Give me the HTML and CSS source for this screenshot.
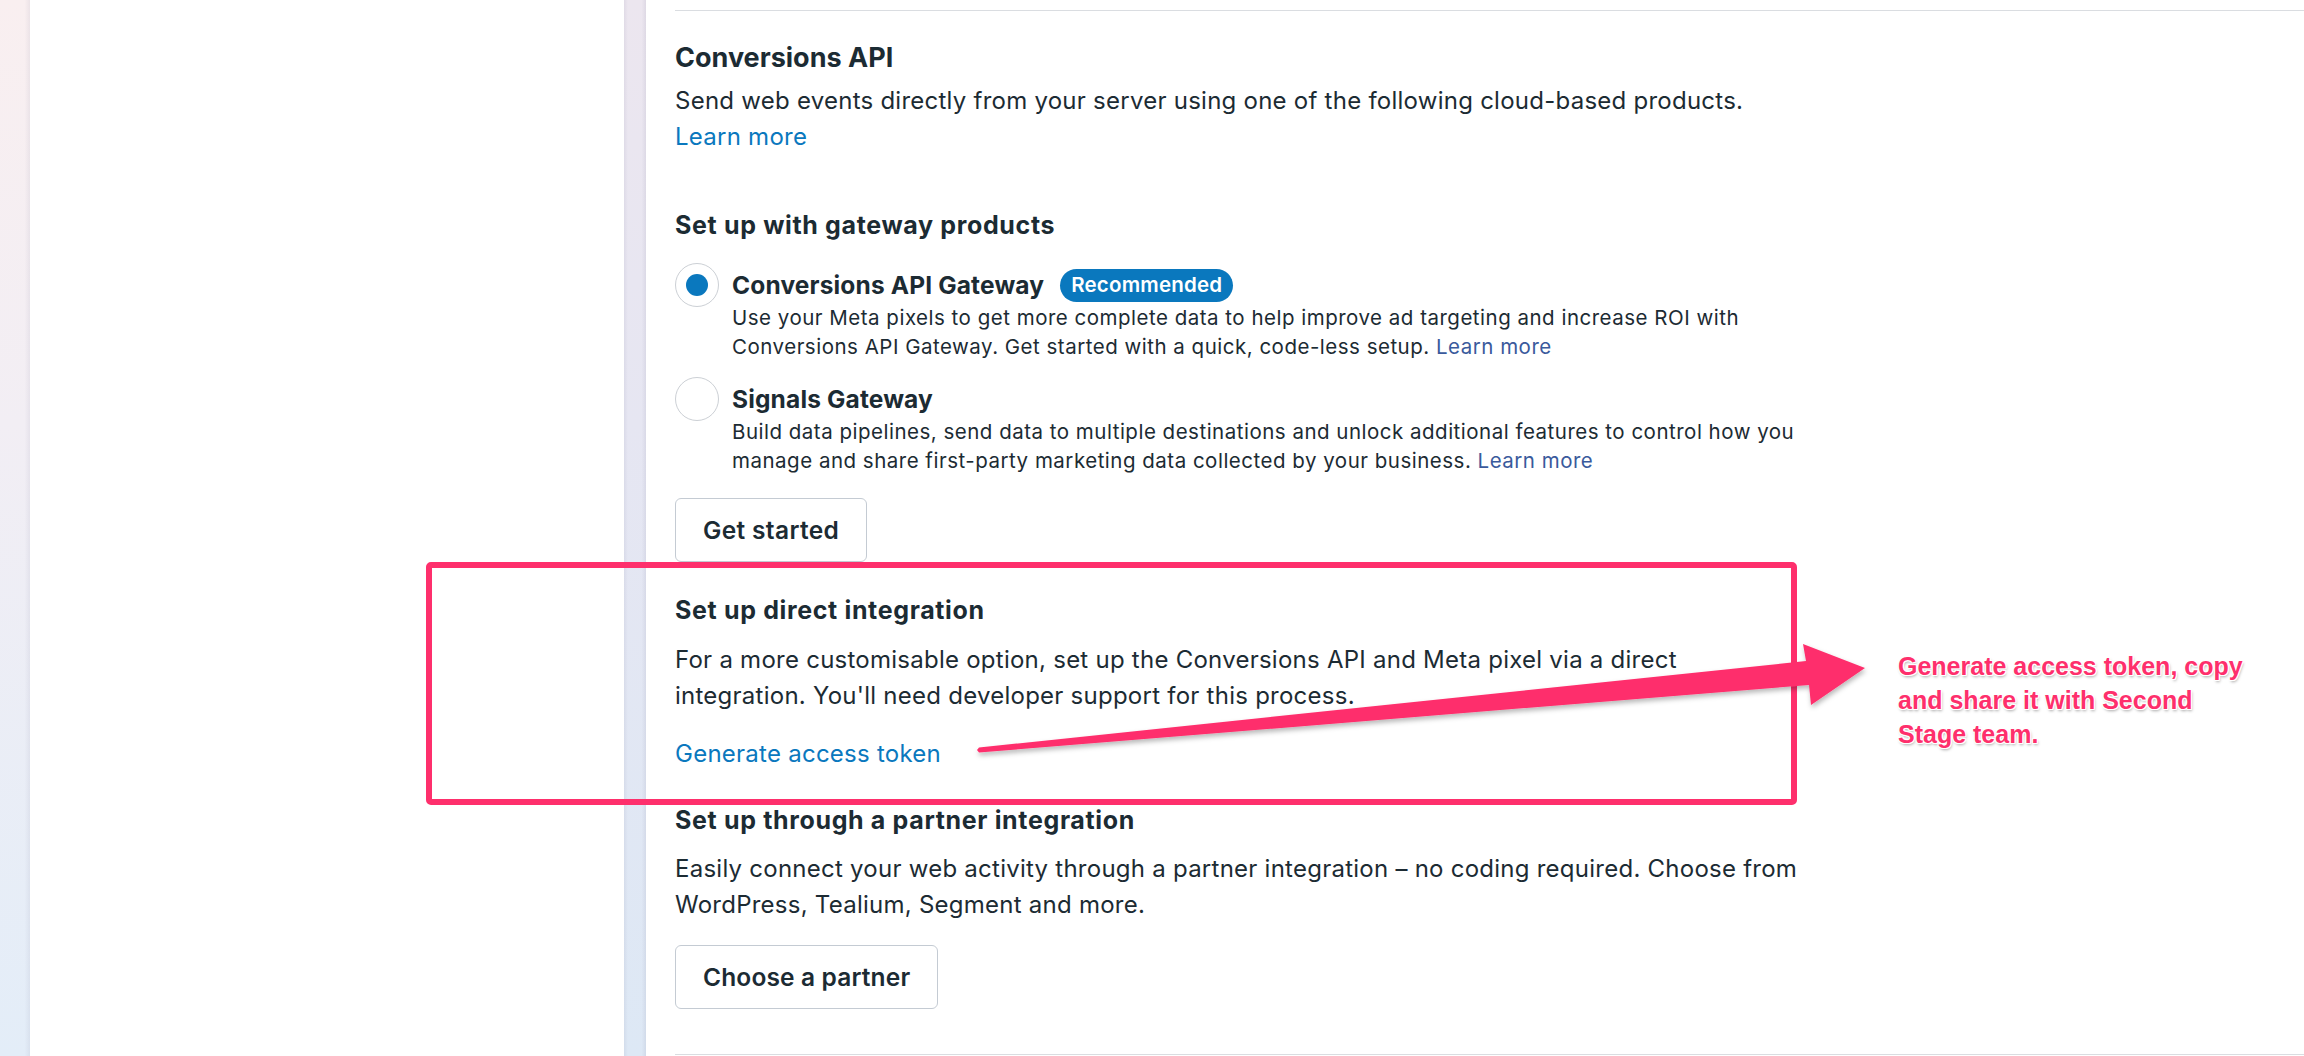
FILE: index.html
```html
<!DOCTYPE html>
<html lang="en">
<head>
<meta charset="utf-8">
<title>Conversions API</title>
<link rel="stylesheet" href="styles.css">
</head>
<body>
<div class="page">
  <div class="gutter gutter-left"></div>
  <aside class="sidebar"></aside>
  <div class="gutter gutter-mid"></div>
  <main class="main">
    <div class="rule"></div>
    <section class="capi">
      <h2 class="title">Conversions API</h2>
      <p class="lead">Send web events directly from your server using one of the following cloud-based products.<br><a class="link" href="#">Learn more</a></p>

      <h3 class="heading heading-gateway">Set up with gateway products</h3>

      <div class="option option-first">
        <span class="radio radio-on"><span class="radio-dot"></span></span>
        <div class="option-body">
          <div class="option-title">Conversions API Gateway <span class="badge">Recommended</span></div>
          <p class="option-desc">Use your Meta pixels to get more complete data to help improve ad targeting and increase ROI with Conversions API Gateway. Get started with a quick, code-less setup. <a class="link-inline" href="#">Learn more</a></p>
        </div>
      </div>

      <div class="option">
        <span class="radio"></span>
        <div class="option-body">
          <div class="option-title">Signals Gateway</div>
          <p class="option-desc">Build data pipelines, send data to multiple destinations and unlock additional features to control how you manage and share first-party marketing data collected by your business. <a class="link-inline" href="#">Learn more</a></p>
        </div>
      </div>

      <button class="btn btn-start" type="button">Get started</button>

      <h3 class="heading heading-direct">Set up direct integration</h3>
      <p class="body-text">For a more customisable option, set up the Conversions API and Meta pixel via a direct integration. You'll need developer support for this process.</p>
      <a class="link link-token" href="#">Generate access token</a>

      <h3 class="heading heading-partner">Set up through a partner integration</h3>
      <p class="body-text">Easily connect your web activity through a partner integration – no coding required. Choose from WordPress, Tealium, Segment and more.</p>
      <button class="btn btn-partner" type="button">Choose a partner</button>
    </section>
    <div class="rule rule-bottom"></div>
  </main>
</div>

<svg class="annot" width="2304" height="1056" viewBox="0 0 2304 1056" aria-hidden="true">
  <defs>
    <filter id="sh" x="-5%" y="-20%" width="110%" height="140%">
      <feDropShadow dx="1" dy="3" stdDeviation="2.5" flood-color="#000" flood-opacity="0.28"/>
    </filter>
  </defs>
  <rect x="429" y="565" width="1365" height="237" rx="2" fill="none" stroke="#fe2f6c" stroke-width="6"/>
  <polygon filter="url(#sh)" fill="#fe2f6c"
    points="979,747.5 1806,661 1803,644 1865,668 1811,705 1809,685 979,752.5 977,750"/>
</svg>
<div class="note">Generate access token, copy<br>and share it with Second<br>Stage team.</div>
</body>
</html>
```

FILE: styles.css
```css
* { box-sizing: border-box; }

html, body {
  margin: 0;
  padding: 0;
}

body {
  width: 2304px;
  height: 1056px;
  overflow: hidden;
  position: relative;
  background: #ffffff;
  font-family: "Inter", "Liberation Sans", sans-serif;
  color: #1c2b33;
}

.page {
  display: flex;
  height: 1056px;
}

.gutter {
  flex: none;
  height: 100%;
}

.gutter-left {
  width: 30px;
  background:
    linear-gradient(to right, rgba(0,0,0,0) 82%, rgba(120,120,150,0.10) 100%),
    linear-gradient(to bottom, #f9eff0 0%, #f2eef4 40%, #e3edf8 100%);
}

.gutter-mid {
  width: 22px;
  background:
    linear-gradient(to right, rgba(120,120,150,0.10) 0%, rgba(0,0,0,0) 18%, rgba(0,0,0,0) 80%, rgba(120,120,150,0.12) 100%),
    linear-gradient(to bottom, #ece6ef 0%, #e6e6f2 40%, #dde8f5 100%);
}

.sidebar {
  flex: none;
  width: 594px;
  background: #ffffff;
}

.main {
  flex: 1;
  background: #ffffff;
  padding-left: 29px;
  display: flex;
  flex-direction: column;
}

.rule {
  height: 1px;
  background: #dadde1;
  margin-top: 10px;
}

.rule-bottom {
  margin-top: 45px;
}

.capi {
  width: 1130px;
}

.title {
  margin: 29px 0 0;
  font-size: 27px;
  line-height: 36px;
  font-weight: 700;
}

.lead {
  margin: 7px 0 0;
  font-size: 24px;
  line-height: 36px;
  letter-spacing: 0.25px;
}

.link {
  color: #0a78be;
  text-decoration: none;
}

.link-inline {
  color: #3a5a9c;
  text-decoration: none;
}

.heading {
  margin: 0;
  font-size: 25px;
  line-height: 32px;
  font-weight: 700;
  letter-spacing: 0.65px;
}

.heading-gateway { margin-top: 54px; }

.option {
  display: flex;
  gap: 13px;
  margin-top: 16px;
}

.option-first { margin-top: 22px; }

.radio {
  flex: none;
  width: 44px;
  height: 44px;
  border-radius: 50%;
  border: 1.5px solid #ccd0d5;
  display: flex;
  align-items: center;
  justify-content: center;
  background: #fff;
}

.radio-dot {
  width: 22px;
  height: 22px;
  border-radius: 50%;
  background: #0a78be;
}

.option-body {
  padding-top: 6px;
}

.option-title {
  font-size: 24.5px;
  line-height: 32px;
  height: 32px;
  font-weight: 700;
  letter-spacing: 0.15px;
  display: flex;
  align-items: center;
  gap: 16px;
}

.badge {
  display: inline-flex;
  align-items: center;
  height: 33px;
  padding: 0 11px;
  border-radius: 17px;
  background: #0a78be;
  color: #ffffff;
  font-size: 20.5px;
  font-weight: 600;
  letter-spacing: 0.2px;
}

.option-desc {
  margin: 2px 0 0;
  font-size: 20.5px;
  line-height: 29px;
  letter-spacing: 0.5px;
  max-width: 1075px;
}

.btn {
  display: block;
  height: 64px;
  padding: 0 27px;
  border: 1px solid #c4cbd3;
  border-radius: 6px;
  background: #ffffff;
  font-family: inherit;
  font-size: 24.5px;
  font-weight: 600;
  letter-spacing: 0.35px;
  color: #1c2b33;
}

.btn-start { margin-top: 23px; }

.btn-partner {
  margin-top: 22px;
  letter-spacing: 0.15px;
}

.heading-direct { margin-top: 32px; }

.body-text {
  margin: 16px 0 0;
  font-size: 24px;
  line-height: 36px;
  letter-spacing: 0.25px;
}

.link-token {
  display: block;
  margin-top: 22px;
  font-size: 24px;
  line-height: 36px;
  letter-spacing: 0.25px;
}

.heading-partner { margin-top: 32px; }

.heading-partner + .body-text { margin-top: 15px; }

.annot {
  position: absolute;
  left: 0;
  top: 0;
  pointer-events: none;
}

.note {
  position: absolute;
  left: 1898px;
  top: 649px;
  font-family: "Liberation Sans", Arial, sans-serif;
  font-weight: 700;
  font-size: 25px;
  line-height: 34px;
  color: #fe2f6c;
  text-shadow:
    1px 0 0 #fff, -1px 0 0 #fff, 0 1px 0 #fff, 0 -1px 0 #fff,
    1px 1px 0 #fff, -1px -1px 0 #fff, 1px -1px 0 #fff, -1px 1px 0 #fff,
    1px 2px 3px rgba(0,0,0,0.35);
}
```
